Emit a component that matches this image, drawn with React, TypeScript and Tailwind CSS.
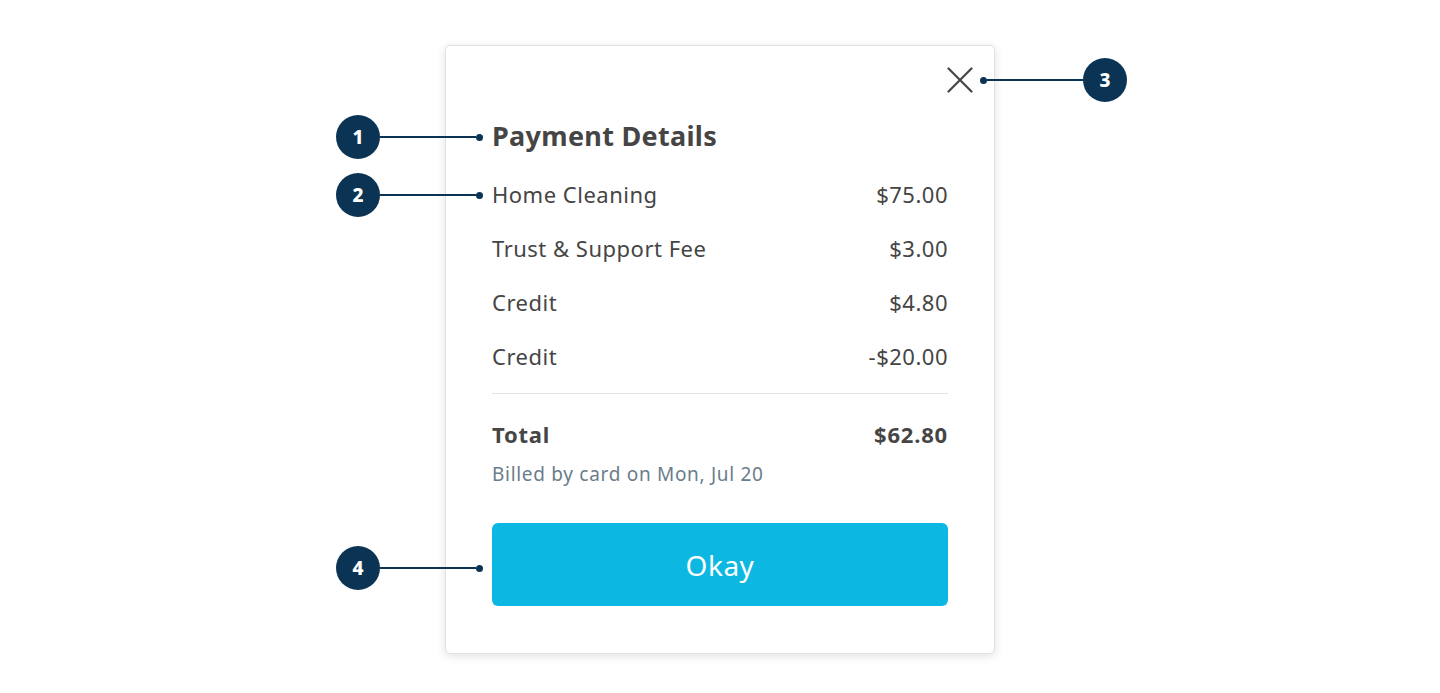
const rows = [
  { label: "Home Cleaning", amount: "$75.00" },
  { label: "Trust & Support Fee", amount: "$3.00" },
  { label: "Credit", amount: "$4.80" },
  { label: "Credit", amount: "-$20.00" },
];

function Callout({ n, x, y, reverse = false }: { n: number; x: number; y: number; reverse?: boolean }) {
  // annotation marker: numbered circle + leader line + dot
  return (
    <div
      className={`absolute flex items-center ${reverse ? "flex-row-reverse" : ""}`}
      style={{ left: x, top: y - 22 }}
    >
      <div className="w-11 h-11 rounded-full bg-[#0b3454] text-white text-[19px] font-extrabold flex items-center justify-center">
        {n}
      </div>
      <div className="w-[96px] h-[2px] bg-[#0b3454]" />
      <div className="w-[7px] h-[7px] rounded-full bg-[#0b3454]" />
    </div>
  );
}

export default function App() {
  return (
    <div
      className="relative w-full h-[693px] bg-white"
      style={{ fontFamily: "'Noto Sans', sans-serif" }}
    >
      <div className="pt-[45px] flex justify-center">
        <div className="relative w-[550px] h-[609px] bg-white border border-[#dfe3e6] rounded-[5px] shadow-[0_2px_10px_rgba(0,0,0,0.12)] px-[46px] pt-[74px] pb-[47px] text-[#454545]">
          <button className="absolute left-[501px] top-[21px] w-[26px] h-[26px] text-[#454545]" aria-label="Close">
            <svg width="26" height="26" viewBox="0 0 26 26" fill="none" stroke="currentColor" strokeWidth="2.2" strokeLinecap="round">
              <path d="M1.5 1.5 L24.5 24.5 M24.5 1.5 L1.5 24.5" />
            </svg>
          </button>

          <h2 className="text-[27px] leading-[32px] font-bold tracking-[0.3px]">Payment Details</h2>

          <div className="mt-[15px]">
            {rows.map((r, i) => (
              <div key={i} className="h-[54px] flex items-center justify-between text-[22px] tracking-[0.5px]">
                <span>{r.label}</span>
                <span>{r.amount}</span>
              </div>
            ))}
          </div>

          <div className="mt-[10px] h-px bg-[#dde3e8]" />

          <div className="mt-[25px] h-[30px] flex items-center justify-between text-[22px] font-bold tracking-[0.8px]">
            <span>Total</span>
            <span>$62.80</span>
          </div>

          <p className="mt-[12px] text-[19px] leading-[26px] text-[#6a7d8b] tracking-[0.7px]">Billed by card on Mon, Jul 20</p>

          <button className="mt-[36px] w-full h-[83px] rounded-[6px] bg-[#0cb8e2] text-white text-[28px] tracking-[0.5px]">
            Okay
          </button>
        </div>
      </div>

      <Callout n={1} x={336} y={137} />
      <Callout n={2} x={336} y={195} />
      <Callout n={4} x={336} y={568} />
      <Callout n={3} x={980} y={80} reverse />
    </div>
  );
}
